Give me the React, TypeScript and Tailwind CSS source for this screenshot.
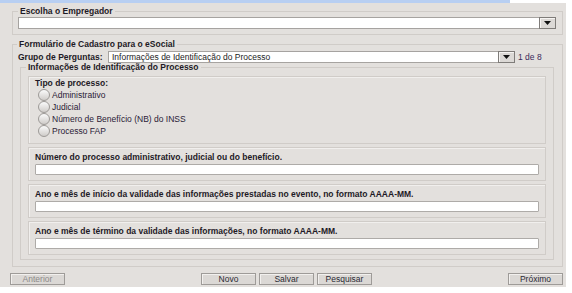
import React from "react";

const Caret = () => (
  <svg width="7" height="4" viewBox="0 0 7 4">
    <path d="M0 0H7L3.5 4Z" fill="#111" />
  </svg>
);

const SelectBox = ({ text, className }: { text?: string; className: string }) => (
  <div className={`flex h-[12px] bg-white border border-[#a6a3a0] ${className}`}>
    <div className="flex-1 pl-[3px] leading-[10px] text-[#1c1c24] whitespace-nowrap overflow-hidden">{text}</div>
    <div className="w-[17px] h-[12px] -mt-[1px] -mr-[1px] flex items-center justify-center bg-[#dcd9d6] border border-[#7f7c79] shadow-[inset_1px_1px_0_#f6f4f2]">
      <Caret />
    </div>
  </div>
);

const Radio = ({ label }: { label: string }) => (
  <div className="flex items-center h-[12px]">
    <div className="w-[12px] h-[12px] ml-[3px] rounded-full border border-[#9d9a97] bg-gradient-to-b from-[#fbfbfb] to-[#cfccc9]" />
    <span className="ml-[2px] leading-[10px] text-[#2a2136]">{label}</span>
  </div>
);

const Field = ({ label }: { label: string }) => (
  <div className="border border-[#d0ccc8] shadow-[inset_1px_1px_0_#f1efed] pt-[4px] pb-[5px] px-[6px]">
    <div className="font-bold leading-[10px] text-[#1e1a26] whitespace-nowrap">{label}</div>
    <div className="mt-[2px] h-[11px] bg-white border border-[#aeaba8] rounded-[1px]" />
  </div>
);

const Btn = ({ label, muted }: { label: string; muted?: boolean }) => (
  <div
    className={`w-[55px] h-[12px] flex items-center justify-center leading-[10px] border border-[#9e9b98] bg-[#dbd8d5] shadow-[inset_1px_1px_0_#f2f0ee] ${
      muted ? "text-[#8d8a88]" : "text-[#2a2a34]"
    }`}
  >
    {label}
  </div>
);

export default function App() {
  return (
    <div className="w-[572px] h-[293px] bg-white font-['Liberation_Sans',Arial,sans-serif] text-[8.5px] overflow-hidden">
      <div className="h-[3px] w-[510px] bg-[#b8cff2]" />
      <div className="w-[566px] h-[284px] bg-[#e3e0dd] pt-[3px] flex flex-col">
        <fieldset className="ml-[12px] w-[551px] border border-[#d0ccc8] pl-[5px] pr-[6px] pb-[5px]">
          <legend className="px-[2px] font-bold leading-[10px] text-[#1e1a26]">Escolha o Empregador</legend>
          <SelectBox className="mt-[1px] w-full" />
        </fieldset>

        <fieldset className="ml-[12px] mt-[4px] w-[551px] border border-[#d0ccc8] pl-[7px] pr-[8px] pb-[6px]">
          <legend className="-ml-[3px] px-[2px] font-bold leading-[10px] text-[#1e1a26]">
            Formulário de Cadastro para o eSocial
          </legend>
          <div className="flex items-center mt-[2px] h-[11px] -ml-[2px]">
            <span className="font-bold leading-[10px] text-[#1e1a26] w-[90px] whitespace-nowrap">Grupo de Perguntas:</span>
            <SelectBox text="Informações de Identificação do Processo" className="w-[407px] h-[11px]" />
            <span className="ml-[3px] leading-[10px] text-[#3a2a5c]">1 de 8</span>
          </div>

          <fieldset className="w-[534px] border border-[#d0ccc8] px-[7px] pb-[4px]">
            <legend className="-ml-[2px] px-[2px] font-bold leading-[10px] text-[#1e1a26]">
              Informações de Identificação do Processo
            </legend>
            <div className="mt-[4px] flex flex-col gap-[3px]">
              <div className="border border-[#d0ccc8] shadow-[inset_1px_1px_0_#f1efed] px-[6px] pt-[1px] pb-[6px]">
                <div className="font-bold leading-[10px] text-[#1e1a26]">Tipo de processo:</div>
                <div className="mt-[1px] flex flex-col">
                  <Radio label="Administrativo" />
                  <Radio label="Judicial" />
                  <Radio label="Número de Benefício (NB) do INSS" />
                  <Radio label="Processo FAP" />
                </div>
              </div>
              <Field label="Número do processo administrativo, judicial ou do benefício." />
              <Field label="Ano e mês de início da validade das informações prestadas no evento, no formato AAAA-MM." />
              <Field label="Ano e mês de término da validade das informações, no formato AAAA-MM." />
            </div>
          </fieldset>
        </fieldset>

        <div className="mt-[6px] ml-[10px] w-[553px] flex justify-between">
          <Btn label="Anterior" muted />
          <div className="flex gap-[3px]">
            <Btn label="Novo" />
            <Btn label="Salvar" />
            <Btn label="Pesquisar" />
          </div>
          <Btn label="Próximo" />
        </div>
      </div>
    </div>
  );
}
